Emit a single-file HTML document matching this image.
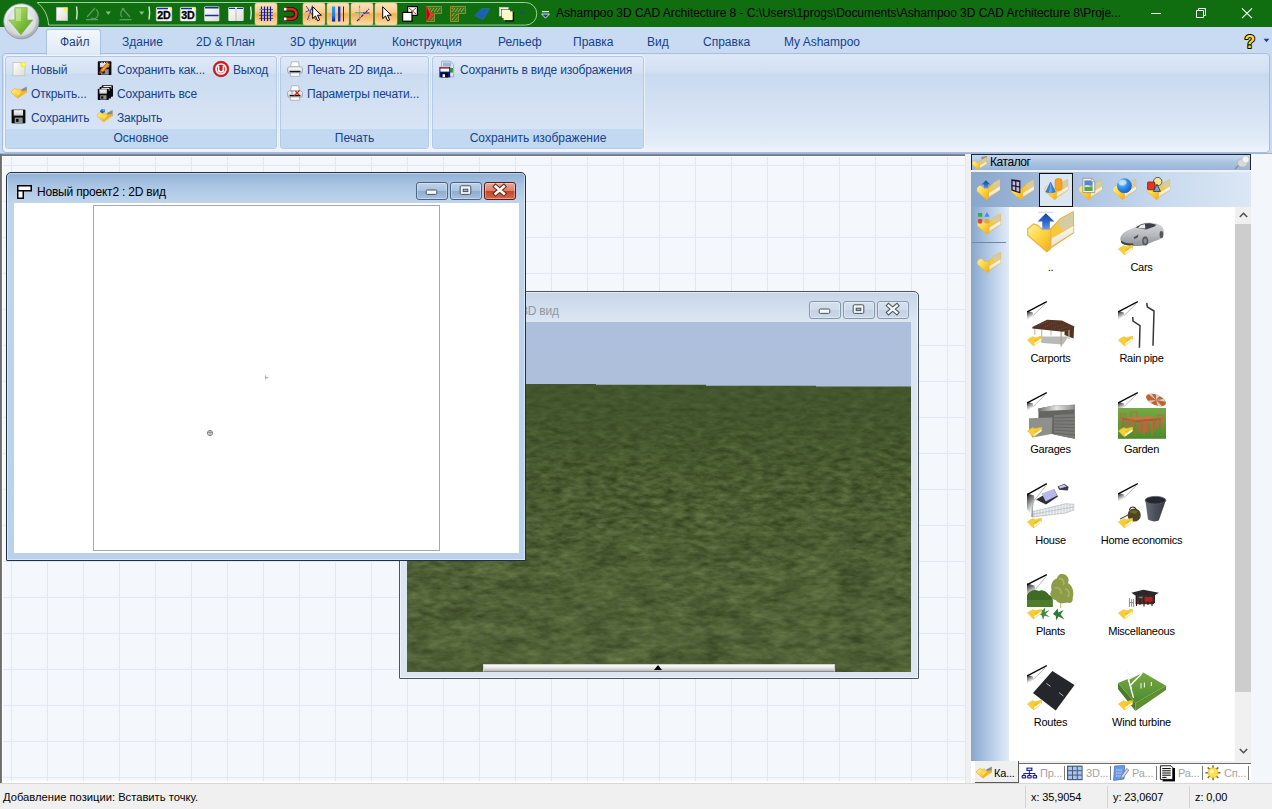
<!DOCTYPE html>
<html lang="ru">
<head>
<meta charset="utf-8">
<title>Ashampoo 3D CAD Architecture 8</title>
<style>
*{box-sizing:border-box;margin:0;padding:0}
html,body{width:1272px;height:809px;overflow:hidden}
body{position:relative;background:#c9dbf3;font-family:"Liberation Sans",sans-serif;font-size:12px;color:#15428b}
.abs{position:absolute}
svg{display:block;overflow:visible}
/* ---------- title bar ---------- */
#title{position:absolute;left:0;top:0;width:1272px;height:27px;background:#106e10}
#title .cap{position:absolute;left:556px;top:6px;white-space:nowrap;color:#000;font-size:12px;letter-spacing:-0.04px}
/* ---------- tab row ---------- */
#tabs{position:absolute;left:0;top:27px;width:1272px;height:27px;background:#c9dbf3}
#tabs .t{position:absolute;top:8px;white-space:nowrap;color:#15428b;font-size:12px}
#tabsel{position:absolute;left:46px;top:29px;width:55px;height:26px;border:1px solid #a9c3e6;border-bottom:none;border-radius:3px 3px 0 0;background:linear-gradient(#f2f7fd,#dfe9f7)}
/* ---------- ribbon ---------- */
#ribbon{position:absolute;left:2px;top:53px;width:1268px;height:100px;border:1px solid #a4bfe3;border-radius:4px;background:linear-gradient(#dde8f6 0,#d4e1f3 17%,#c9daef 21%,#d6e3f4 60%,#e3ecf8 92%,#ebf2fc 96%,#ebf2fc 100%)}
.grp{position:absolute;top:56px;height:93px;border:1px solid #b4c9e6;border-radius:3px;background:linear-gradient(#dfe9f7 0,#d5e2f4 17%,#cbdcf1 19%,#dce7f6 100%);box-shadow:0 0 0 1px rgba(255,255,255,.55)}
.grp .lab{position:absolute;left:0;right:0;bottom:0;height:19px;background:#c3d8f1;text-align:center;line-height:18px;color:#15428b;border-radius:0 0 2px 2px}
.btn{position:absolute;white-space:nowrap;color:#15428b;line-height:16px;letter-spacing:-.15px}
.ico{position:absolute;width:16px;height:16px}
/* ---------- mdi ---------- */
#mdi{position:absolute;left:0;top:153px;width:966px;height:630px;background-color:#f4f7fb;
background-image:linear-gradient(90deg,#e0e9f3 1px,transparent 1px),linear-gradient(#e0e9f3 1px,transparent 1px);background-size:36px 36px;background-position:11px 12px}
/* ---------- mdi child windows ---------- */
.win{position:absolute;border:1px solid #4a5560;border-radius:5px 5px 1px 1px;background:linear-gradient(#c6d6e8 0,#dbe6f2 30px,#dbe6f2 100%);box-shadow:inset 0 0 0 1px rgba(255,255,255,.55)}
.win.act{border-color:#20303c;background:linear-gradient(#8fb0d6 0,#a9c4e3 12px,#c0d5ec 30px,#b9d1ec 100%);box-shadow:inset 0 0 0 1px rgba(255,255,255,.45)}
.win .wt{position:absolute;top:12px;white-space:nowrap;color:#000;font-size:12px;line-height:14px;letter-spacing:-.2px}
.wb{position:absolute;top:9px;width:32px;height:18px;border:1px solid #8797ac;border-radius:3px;background:linear-gradient(#d6e1ee 0,#cfdbea 48%,#c3d2e4 52%,#ccd9e9 100%);box-shadow:inset 0 0 0 1px rgba(255,255,255,.35)}
.win.act .wb{border-color:#4c6380;background:linear-gradient(#bed1ea 0,#aac2e0 48%,#8eabd0 52%,#a8c1e2 100%)}
.win.act .wb.cl{border-color:#5a1d14;background:linear-gradient(#e9a99b 0,#d9806c 48%,#c4452a 52%,#d4694c 100%);box-shadow:inset 0 0 0 1px rgba(255,255,255,.35)}
/* ---------- catalog ---------- */
#rightbg{position:absolute;left:971px;top:154px;width:301px;height:629px;background:#f3f7fb}
#cat{position:absolute;left:971px;top:154px;width:280px;height:629px;background:#f0f0f0}
#cathdr{position:absolute;left:0;top:0;width:280px;height:16px;border:1px solid #1c2530;border-bottom:none;background:linear-gradient(#c9daee,#a9c3e2 50%,#98b6da);color:#000}
#cathdr span{position:absolute;left:18px;top:0;font-size:12px;line-height:14px;letter-spacing:-.45px}
#cattb{position:absolute;left:0;top:17px;width:280px;height:36px;background:linear-gradient(90deg,#89a6cc 0,#a9c1e0 35%,#c9dbef 70%,#dbe7f5 100%);border-top:1px solid #eef3fa}
#cattb .sel{position:absolute;left:68px;top:1px;width:34px;height:34px;border:1px solid #111;background:#dbe6f3}
#catside{position:absolute;left:0;top:53px;width:38px;height:554px;background:linear-gradient(90deg,#88a6cc 0,#b4cae6 50%,#e3ecf8 100%)}
#catlist{position:absolute;left:38px;top:53px;width:226px;height:554px;background:#fff}
#catsb{position:absolute;left:264px;top:53px;width:16px;height:554px;background:#f0f0f0}
#cattabs{position:absolute;left:0;top:607px;width:280px;height:22px;background:#f0f0f0}
.ct{position:absolute;top:6px;font-size:11px;line-height:13px;color:#a3a3a3;white-space:nowrap;letter-spacing:-.2px}
.it{position:absolute;width:48px;height:48px}
.il{position:absolute;width:120px;text-align:center;color:#000;font-size:11px;line-height:13px;white-space:nowrap;letter-spacing:-.25px}
/* ---------- status ---------- */
#status{position:absolute;left:0;top:783px;width:1272px;height:26px;background:#f0f0f0;border-top:1px solid #d7d7d7;color:#000;font-size:11px}
#status span{position:absolute;top:7px;white-space:nowrap;letter-spacing:-.1px}
#status i{position:absolute;top:2px;width:1px;height:22px;background:#d4d4d4}
</style>
</head>
<body>
<div id="title"><div class="cap">Ashampoo 3D CAD Architecture 8 - C:\Users\1progs\Documents\Ashampoo 3D CAD Architecture 8\Proje...</div></div>
<div id="tabs">
<span class="t" style="left:122px">Здание</span>
<span class="t" style="left:196px">2D &amp; План</span>
<span class="t" style="left:290px">3D функции</span>
<span class="t" style="left:392px">Конструкция</span>
<span class="t" style="left:498px">Рельеф</span>
<span class="t" style="left:573px">Правка</span>
<span class="t" style="left:647px">Вид</span>
<span class="t" style="left:703px">Справка</span>
<span class="t" style="left:784px">My Ashampoo</span>
</div>
<div id="ribbon"></div>
<!--QAT_S--><svg class="abs" style="left:0;top:0" width="1272" height="54" viewBox="0 0 1272 54">
 <defs>
  <linearGradient id="og" x1="0" y1="0" x2="0" y2="1"><stop offset="0" stop-color="#fde2bd"/><stop offset=".42" stop-color="#fbcb8c"/><stop offset=".5" stop-color="#f7ad4f"/><stop offset="1" stop-color="#fdddaa"/></linearGradient>
  <radialGradient id="orbo" cx=".4" cy=".3" r=".75"><stop offset="0" stop-color="#ffffff"/><stop offset=".55" stop-color="#e4e8ec"/><stop offset="1" stop-color="#9ea4ab"/></radialGradient>
  <radialGradient id="orbi" cx=".5" cy=".4" r=".6"><stop offset="0" stop-color="#ffffff"/><stop offset="1" stop-color="#cfd4d9"/></radialGradient>
  <linearGradient id="garr" x1="0" y1="0" x2="1" y2="1"><stop offset="0" stop-color="#c4e88c"/><stop offset=".5" stop-color="#86c440"/><stop offset="1" stop-color="#4f9a1c"/></linearGradient>
  <linearGradient id="docg" x1="0" y1="0" x2="1" y2="1"><stop offset="0" stop-color="#ffffff"/><stop offset="1" stop-color="#dcdcd6"/></linearGradient>
  <linearGradient id="barb" x1="0" y1="0" x2="0" y2="1"><stop offset="0" stop-color="#2aa0e8"/><stop offset=".6" stop-color="#1d7fd8"/><stop offset="1" stop-color="#0a1fa0"/></linearGradient>
  <symbol id="cur" viewBox="0 0 10 16"><path d="M.7 .8 V12.6 L3.5 10 L5.6 14.8 L7.6 13.9 L5.5 9.2 H9.3Z" fill="#fff" stroke="#000" stroke-width="1" stroke-linejoin="round"/></symbol>
  <symbol id="hat" viewBox="0 0 16 16"><path d="M.5 .5 H15.5 V7.5 H8.5 V15.5 H.5Z" fill="#2f7a1f" stroke="#9a8a2a" stroke-width="1"/><path d="M2 6 L5 2 M5 6 L8 2 M8 6 L11 2 M11 6 L14 2 M2 10 L4.5 7 M5 10.5 L7.5 7.5 M2 14 L4.5 11 M5 14.5 L7.5 11.5 M2 3 L3 1.5" stroke="#a9a23a" stroke-width="1"/></symbol>
 </defs>
 <!-- QAT outline -->
 <path d="M37 2.5 H525.5 A11.3 11.3 0 0 1 525.5 25.1 H48.6 C48 15 43.5 7.5 37 2.5Z" fill="none" stroke="#9ed09e" stroke-width="1"/>
 <!-- orb -->
 <circle cx="21.3" cy="21.3" r="17.6" fill="url(#orbo)" stroke="#8d949b" stroke-width=".8"/>
 <circle cx="21.3" cy="21.3" r="14.6" fill="url(#orbi)"/>
 <path d="M14.8 7.6 H27.2 V20 H32.8 L20.9 34.8 L8.8 20 H14.8Z" fill="url(#garr)" stroke="#7db04a" stroke-width=".6" stroke-linejoin="round"/>
 <path d="M16 8.6 H21 V21 H16Z" fill="#d8f0b0" opacity=".55"/>
 <!-- new doc -->
 <path d="M56.5 7.5 H67.5 V20.5 H56.5Z" fill="url(#docg)" stroke="#c9c9bd" stroke-width=".8"/><circle cx="65.6" cy="9.4" r="2" fill="#fff34a"/>
 <!-- separators -->
 <path d="M76.5 6.5 Q77.8 13 76.5 19.5 M149 6.5 Q150.3 13 149 19.5 M250.6 6.5 Q251.9 13 250.6 19.5" stroke="#d9ecd9" stroke-width="1.4" fill="none"/>
 <!-- undo / redo (disabled) -->
 <g stroke="#5f9a5f" stroke-width="1.2" fill="none"><path d="M87 17 L95 8 M96 9.5 A4.6 5 0 0 1 91 18 M86 19.6 H98"/><path d="M130 17 L122 8 M124.5 8.6 A4.6 5 0 0 0 122 17 M119.6 19.6 H131.6"/></g>
 <path d="M105.6 11.6 H111 L108.3 14.8Z M139 11.6 H144.4 L141.7 14.8Z" fill="#8cbd8c"/>
 <!-- 2D / 3D icons -->
 <g><rect x="156.3" y="7.3" width="15.4" height="13.6" rx="1" fill="#fff" stroke="#d4d4d4" stroke-width=".6"/><path d="M157 8.6 H168" stroke="#1b2ea0" stroke-width="1.4"/><path d="M168.4 7.3 H171.6 V10.4Z" fill="#ffe94a"/>
  <rect x="180.3" y="7.3" width="15.4" height="13.6" rx="1" fill="#fff" stroke="#d4d4d4" stroke-width=".6"/><path d="M181 8.6 H192" stroke="#1b2ea0" stroke-width="1.4"/><path d="M192.4 7.3 H195.6 V10.4Z" fill="#ffe94a"/></g>
 <text x="164" y="19.4" text-anchor="middle" font-family="Liberation Sans, sans-serif" font-weight="bold" font-size="11" fill="#000" stroke="#000" stroke-width=".35" textLength="13.6" lengthAdjust="spacingAndGlyphs">2D</text>
 <text x="188" y="19.4" text-anchor="middle" font-family="Liberation Sans, sans-serif" font-weight="bold" font-size="11" fill="#000" stroke="#000" stroke-width=".35" textLength="13.6" lengthAdjust="spacingAndGlyphs">3D</text>
 <!-- split icons -->
 <rect x="204.3" y="6.6" width="15" height="14.6" rx="1" fill="url(#docg)"/><path d="M205 7.8 H218.6 M205 15.4 H218.6" stroke="#1b2ea0" stroke-width="1.5"/>
 <rect x="228.3" y="7" width="15.4" height="14" rx="1" fill="url(#docg)"/><path d="M229 8.4 H235 M237 8.4 H243" stroke="#1b2ea0" stroke-width="1.4"/><path d="M236 8 V21" stroke="#b9b9b9" stroke-width="1"/>
 <!-- highlighted buttons -->
 <g fill="url(#og)" stroke="#e9c38f" stroke-width=".6"><rect x="255" y="3" width="22" height="22" rx="2"/><rect x="303" y="3" width="22" height="22" rx="2"/><rect x="327" y="3" width="22" height="22" rx="2"/><rect x="351" y="3" width="22" height="22" rx="2"/><rect x="375" y="3" width="22" height="22" rx="2"/></g>
 <!-- grid icon -->
 <path d="M259 9.5 H273 M259 12.5 H273 M259 15.5 H273 M259 18.5 H273" stroke="#2a6fd0" stroke-width="1.2"/><path d="M261.5 6.5 V21 M264.5 6.5 V21 M267.5 6.5 V21 M270.5 6.5 V21" stroke="#1a1496" stroke-width="1.2"/><path d="M259 9.5 H262 M259 12.5 H261" stroke="#35b6d8" stroke-width="1.2"/>
 <!-- magnet -->
 <path d="M284 9.2 H291.5 A4.8 4.8 0 0 1 291.5 18.8 H284" fill="none" stroke="#111" stroke-width="4.6"/><path d="M284 9.2 H291.5 A4.8 4.8 0 0 1 291.5 18.8 H284" fill="none" stroke="#d8281c" stroke-width="2.8"/><path d="M284 9.2 H286.4 M284 18.8 H286.4" stroke="#fff" stroke-width="2.8"/>
 <!-- star cursor -->
 <path d="M306 6 L316 20 M312.5 5.5 L307.5 20 M305.5 12 L315 8" stroke="#2a3fc0" stroke-width=".9"/><path d="M309.5 10 V21" stroke="#9ac" stroke-width=".8" stroke-dasharray="1 1"/><use href="#cur" x="312" y="6" width="10" height="16"/>
 <!-- bars -->
 <rect x="332" y="6.5" width="3.2" height="15" fill="url(#barb)"/><rect x="338" y="6.5" width="2.4" height="15" fill="#1636b8"/><path d="M343.5 6.5 V21.5" stroke="#1a1a90" stroke-width="1"/>
 <!-- cross lines -->
 <path d="M359.5 5.5 V21" stroke="#3ab8c8" stroke-width="1.2" stroke-dasharray="3 1 1 1"/><path d="M355 12.6 H364" stroke="#3ab8c8" stroke-width="1.1"/><path d="M357 21 L369 9" stroke="#2222b0" stroke-width="1.1" stroke-dasharray="3 1 1 1"/><path d="M363 13 H369.5" stroke="#2222b0" stroke-width="1"/>
 <!-- arrow cursor -->
 <use href="#cur" x="382" y="6" width="10" height="16"/>
 <!-- two squares w/ X -->
 <rect x="407.6" y="6.6" width="9.8" height="8.8" fill="#fff" stroke="#000" stroke-width="1.2"/><path d="M409 8 L416 14 M416 8 L409 14" stroke="#b0362a" stroke-width="1"/><rect x="402.6" y="12.4" width="9.4" height="8.8" fill="#fff" stroke="#000" stroke-width="1.2"/>
 <!-- hatch icons -->
 <use href="#hat" x="426" y="6" width="16" height="16"/><path d="M426.4 6.4 L434 15 L426.4 21.6Z" fill="#e03a34"/><path d="M426.4 6.4 L430 14.5 L426.4 21.6Z" fill="#a01410"/>
 <use href="#hat" x="450" y="6" width="16" height="16"/>
 <!-- blue parallelogram -->
 <path d="M474.8 15.6 L482 8.4 L489.8 8.8 L483 19.6Z" fill="#1d5fb2" stroke="#2a78d0" stroke-width=".5"/>
 <!-- pages -->
 <rect x="499.4" y="7.4" width="8.8" height="8.6" fill="#f4f2dc" stroke="#ddd" stroke-width=".5"/><rect x="501.6" y="9.6" width="8.8" height="8.6" fill="#f8f6dc" stroke="#222" stroke-width=".5"/><path d="M505 20.8 H513.4 V12" stroke="#000" stroke-width="1.4" fill="none"/><rect x="503.6" y="11.4" width="9" height="8.8" fill="#fffbc6"/>
 <path d="M519.8 12 H524.6 L522.2 14.4Z" fill="#1c4a8c"/>
 <!-- customise -->
 <path d="M542 11.6 H549" stroke="#e6f0e6" stroke-width="1.2"/><path d="M541.6 14 H549.4 L545.5 18.2Z" fill="#1c3f9c" stroke="#e6f0e6" stroke-width=".9" stroke-linejoin="round"/>
 <!-- window controls -->
 <path d="M1151 13.5 H1161" stroke="#fff" stroke-width="1"/>
 <path d="M1196.5 10.5 H1203.5 V17.5 H1196.5Z M1198.5 10.5 V8.5 H1205.5 V15.5 H1203.5" fill="none" stroke="#fff" stroke-width="1"/>
 <path d="M1242 8.3 L1252 18.1 M1252 8.3 L1242 18.1" stroke="#fff" stroke-width="1.1"/>
 <!-- help -->
 <text x="1249.8" y="47.6" text-anchor="middle" font-family="Liberation Sans, sans-serif" font-weight="bold" font-size="17.5" fill="#f7df2a" stroke="#000" stroke-width="2" stroke-linejoin="round" paint-order="stroke">?</text>
 <path d="M1263.6 38.8 H1269.4 L1266.5 42.2Z" fill="#1c3f9c"/>
</svg>
<!--QAT_E-->
<div id="tabsel"></div>
<span class="abs" style="left:60px;top:35px;color:#15428b">Файл</span>
<div class="grp" style="left:5px;width:272px"><div class="lab">Основное</div></div>
<div class="grp" style="left:280px;width:149px"><div class="lab">Печать</div></div>
<div class="grp" style="left:432px;width:212px"><div class="lab">Сохранить изображение</div></div>
<span class="btn" style="left:31px;top:62px">Новый</span>
<span class="btn" style="left:31px;top:86px">Открыть...</span>
<span class="btn" style="left:31px;top:110px">Сохранить</span>
<span class="btn" style="left:117px;top:62px">Сохранить как...</span>
<span class="btn" style="left:117px;top:86px">Сохранить все</span>
<span class="btn" style="left:117px;top:110px">Закрыть</span>
<span class="btn" style="left:233px;top:62px">Выход</span>
<span class="btn" style="left:307px;top:62px">Печать 2D вида...</span>
<span class="btn" style="left:307px;top:86px">Параметры печати...</span>
<span class="btn" style="left:460px;top:62px">Сохранить в виде изображения</span>
<!--RI_S--><svg class="abs" style="left:0;top:54px" width="660" height="100" viewBox="0 54 660 100">
 <defs>
  <linearGradient id="lblg" x1="0" y1="0" x2="0" y2="1"><stop offset="0" stop-color="#ffffff"/><stop offset="1" stop-color="#c4c7cc"/></linearGradient>
  <symbol id="flop" viewBox="0 0 15 15"><rect x=".3" y=".3" width="14.4" height="14.4" rx="1" fill="#0a0a0a"/><rect x="2.6" y="1" width="9.6" height="5.6" fill="url(#lblg)"/><rect x="3.6" y="8.6" width="8.2" height="5.6" fill="#8d9096"/><rect x="5" y="10" width="2.6" height="3" fill="#0a0a0a"/></symbol>
  <symbol id="ofold" viewBox="0 0 17 13"><path d="M10.6 3.6 L16.4 .4 V6.6 L11 8Z" fill="#858a92"/><path d="M8.4 5.6 L16.4 4.4 L16.6 6.4 L7.4 12.6Z" fill="#f4b81c"/><path d="M.5 5.2 L4 2.6 L6.6 3.6 L9 3 L10.6 5.4 L7.4 12.6 L.6 7Z" fill="url(#fy)" stroke="#e0a820" stroke-width=".6" stroke-linejoin="round"/><path d="M5.6 7.2 L11.6 5 L8 9.6Z" fill="#ffe27a" opacity=".8"/></symbol>
  <linearGradient id="prg" x1="0" y1="0" x2="0" y2="1"><stop offset="0" stop-color="#ffffff"/><stop offset="1" stop-color="#cfd2d6"/></linearGradient>
  <symbol id="prn" viewBox="0 0 16 16"><path d="M4.4 .8 H11.6 L12.4 6 H3.6Z" fill="#fff" stroke="#9a9da2" stroke-width=".7"/><rect x=".6" y="5.8" width="14.8" height="6.6" rx="2.2" fill="url(#prg)" stroke="#8a8d92" stroke-width=".7"/><path d="M2.6 10.6 H13.4" stroke="#111" stroke-width="1.5"/><path d="M3.4 12 H12.6 V15.2 H3.4Z" fill="#fff" stroke="#9a9da2" stroke-width=".7"/></symbol>
 </defs>
 <!-- new -->
 <rect x="13" y="62.4" width="12" height="13.4" fill="url(#docg)" stroke="#c2c2b8" stroke-width=".8"/><circle cx="23" cy="64.8" r="2.8" fill="#f4ee3c"/><circle cx="23.6" cy="64.2" r="1.3" fill="#fdfb9a"/>
 <!-- open -->
 <use href="#ofold" x="10.8" y="86" width="16.6" height="12.7"/>
 <!-- save -->
 <use href="#flop" x="11.2" y="109.2" width="14.6" height="14.6"/>
 <!-- save as -->
 <use href="#flop" x="97.4" y="61" width="14.4" height="14.4"/><path d="M100 62.6 H109" stroke="#111" stroke-width="1" stroke-dasharray="1.5 1"/><path d="M99.6 73.2 L100.6 69.8 L107.6 62.6 L109.8 64.6 L102.8 72Z" fill="#f5a623" stroke="#c0391b" stroke-width=".9" stroke-linejoin="round"/><path d="M99.6 73.2 L100.6 69.8 L102.8 72Z" fill="#c0391b"/>
 <!-- save all -->
 <g><rect x="101.6" y="85.2" width="11.4" height="11.6" rx=".8" fill="#0a0a0a"/><rect x="103.4" y="86" width="8" height="3" fill="#f4f4f4"/><rect x="99.6" y="87" width="11.4" height="11.6" rx=".8" fill="#0a0a0a"/><rect x="101.4" y="87.8" width="8" height="3" fill="#f4f4f4"/><use href="#flop" x="97.4" y="88.6" width="11.6" height="11.6"/></g>
 <!-- close -->
 <use href="#ofold" x="96.6" y="109.6" width="16.6" height="12.7"/><path d="M100 111.8 Q100.6 108.8 103.6 109 Q105.6 109.4 105 111.6 L102.4 113.4Z" fill="#1c5fd0"/><circle cx="103.6" cy="110.2" r="1.1" fill="#6ab0ff"/>
 <!-- exit -->
 <circle cx="221" cy="69" r="7.8" fill="#d4161c"/><circle cx="221" cy="69" r="7.8" fill="none" stroke="#a80d12" stroke-width=".6"/><circle cx="221" cy="69" r="5" fill="none" stroke="#fff" stroke-width="1.7"/><path d="M218.6 66 V69.4 A2.4 2.4 0 0 0 223.4 69.4 V66" fill="none" stroke="#fff" stroke-width="1.7"/><rect x="219.8" y="65" width="2.4" height="4.2" fill="#d4161c"/>
 <!-- printers -->
 <use href="#prn" x="287" y="61" width="16" height="16"/>
 <use href="#prn" x="287" y="85" width="16" height="16"/><path d="M294 96 L299.6 90.4 M295.4 91 L299 95" stroke="#cc2a1c" stroke-width="1.3"/><path d="M290.6 91.6 H293.6 M291 93 H293" stroke="#777" stroke-width=".6"/>
 <!-- save as image -->
 <g><path d="M441.6 61.2 H450.4 L453.6 64.4 V76.8 H441.6Z" fill="#dfe6ee" stroke="#8d96a3" stroke-width=".7"/><rect x="443" y="62.6" width="8" height="4" fill="#9ab6d8"/><rect x="450" y="68" width="3" height="4.6" fill="#2f9a3f"/><rect x="439.4" y="67" width="10.8" height="10.4" fill="#0a1680"/><rect x="440.4" y="67.2" width="8.8" height="1.4" fill="#e0342a"/><rect x="440.4" y="68.6" width="8.8" height="3" fill="#fff"/><rect x="441.4" y="73" width="6.6" height="4.4" fill="#0a0a0a"/><rect x="442.6" y="74.2" width="2.4" height="3" fill="#fff"/></g>
</svg>
<!--RI_E-->

<div id="mdi"></div>
<div class="abs" style="left:0;top:153px;width:1272px;height:1px;background:#9db4d6"></div>
<div class="abs" style="left:0;top:154px;width:966px;height:2px;background:linear-gradient(#8e98a8,#696969)"></div>
<div class="abs" style="left:0;top:154px;width:2px;height:629px;background:linear-gradient(90deg,#696969,#7d7d7d)"></div>
<div class="abs" style="left:2px;top:156px;width:964px;height:1px;background:#fff"></div>
<div class="abs" style="left:2px;top:156px;width:1px;height:626px;background:#fff"></div>
<div class="abs" style="left:2px;top:781px;width:964px;height:2px;background:#fff"></div>
<div class="abs" style="left:965px;top:154px;width:1px;height:629px;background:#e6e6e6"></div>
<div class="abs" style="left:966px;top:154px;width:5px;height:629px;background:#f0f0f0"></div>
<!-- 3D window (inactive) -->
<div class="win" id="w3d" style="left:399px;top:291px;width:520px;height:388px">
 <div class="wt" style="color:#8e98a5;left:30px">Новый проект2 : 3D вид</div>
 <div class="wb" style="left:409px"><svg class="abs" style="left:0;top:0" width="30" height="16" viewBox="0 0 30 16"><rect x="9.2" y="7" width="10.6" height="4.4" rx="1.2" fill="#f6f8fa" stroke="#46525f" stroke-width="1"/></svg></div>
 <div class="wb" style="left:443px"><svg class="abs" style="left:0;top:0" width="30" height="16" viewBox="0 0 30 16"><rect x="9.2" y="2.8" width="10.6" height="8.6" rx="1.2" fill="#f6f8fa" stroke="#46525f" stroke-width="1"/><rect x="12.2" y="6.2" width="4.6" height="2.4" fill="#9fb3cc" stroke="#46525f" stroke-width="1"/></svg></div>
 <div class="wb" style="left:477px"><svg class="abs" style="left:0;top:0" width="30" height="16" viewBox="0 0 30 16"><path d="M10.6 3.6 L18.8 10.6 M18.8 3.6 L10.6 10.6" stroke="#46525f" stroke-width="4.4" stroke-linecap="square"/><path d="M10.6 3.6 L18.8 10.6 M18.8 3.6 L10.6 10.6" stroke="#f6f8fa" stroke-width="2.4" stroke-linecap="square"/></svg></div>
 <div class="abs" id="scene" style="left:7px;top:30px;width:504px;height:350px;overflow:hidden;background:#4d5d33">
  <svg width="504" height="350" viewBox="0 0 504 350">
   <defs>
    <filter id="gr" x="0" y="0" width="100%" height="100%" color-interpolation-filters="sRGB">
     <feTurbulence type="fractalNoise" baseFrequency="0.09 0.22" numOctaves="4" seed="7"/>
     <feColorMatrix type="matrix" values="0.34 0.10 0 0 0.07  0.36 0.12 0 0 0.12  0.28 0.06 0 0 0.02  0 0 0 0 1"/>
    </filter>
    <filter id="gr2" x="0" y="0" width="100%" height="100%" color-interpolation-filters="sRGB">
     <feTurbulence type="fractalNoise" baseFrequency="0.028 0.07" numOctaves="4" seed="11"/>
     <feColorMatrix type="matrix" values="0.30 0.12 0 0 0.09  0.32 0.14 0 0 0.14  0.24 0.08 0 0 0.04  0 0 0 0 1"/>
    </filter>
    <linearGradient id="gm" x1="0" y1="0" x2="0" y2="1"><stop offset="0" stop-color="#fff" stop-opacity="0"/><stop offset=".25" stop-color="#fff" stop-opacity=".12"/><stop offset="1" stop-color="#fff" stop-opacity=".62"/></linearGradient>
    <mask id="gmask"><rect width="504" height="350" fill="url(#gm)"/></mask>
    <linearGradient id="gflat" x1="0" y1="0" x2="0" y2="1"><stop offset="0" stop-color="#46592f" stop-opacity=".7"/><stop offset="1" stop-color="#46592f" stop-opacity="0"/></linearGradient>
    <linearGradient id="gshade" x1="0" y1="0" x2="0" y2="1"><stop offset="0" stop-color="#1c2a10" stop-opacity=".28"/><stop offset=".3" stop-color="#1c2a10" stop-opacity=".05"/><stop offset="1" stop-color="#fff" stop-opacity=".03"/></linearGradient>
   </defs>
   <rect width="504" height="350" filter="url(#gr)"/>
   <g mask="url(#gmask)"><rect width="504" height="350" filter="url(#gr2)"/></g>
   <rect y="60" width="504" height="290" fill="url(#gshade)"/><rect y="60" width="504" height="110" fill="url(#gflat)"/>
   <path d="M0 0H504V64.5H409V63.7H299V62.8H189V62H0Z" fill="#adbfdb"/>
  </svg>
  <div class="abs" style="left:76px;top:342px;width:352px;height:8px;background:linear-gradient(#fdfdfd,#e9e9e9 45%,#b9b9b9);border:1px solid #cfcfcf;border-bottom-color:#8a8a8a"></div>
  <div class="abs" style="left:247px;top:343px;width:0;height:0;border:4px solid transparent;border-top:none;border-bottom:5px solid #000"></div>
 </div>
</div>
<!-- 2D window (active) -->
<div class="win act" id="w2d" style="left:6px;top:172px;width:520px;height:389px">
 <svg class="abs" style="left:10px;top:12px" width="15" height="14" viewBox="0 0 15 14"><path d="M.75.75H14.25V5.75H6.25V13.25H.75Z" fill="#fff" stroke="#000" stroke-width="1.5"/><path d="M.75 5.75H6.25" fill="none" stroke="#000" stroke-width="1.5"/></svg>
 <div class="wt" style="left:30px">Новый проект2 : 2D вид</div>
 <div class="wb" style="left:409px"><svg class="abs" style="left:0;top:0" width="30" height="16" viewBox="0 0 30 16"><rect x="9.2" y="7" width="10.6" height="4.4" rx="1.2" fill="#f6f8fa" stroke="#46525f" stroke-width="1"/></svg></div>
 <div class="wb" style="left:443px"><svg class="abs" style="left:0;top:0" width="30" height="16" viewBox="0 0 30 16"><rect x="9.2" y="2.8" width="10.6" height="8.6" rx="1.2" fill="#f6f8fa" stroke="#46525f" stroke-width="1"/><rect x="12.2" y="6.2" width="4.6" height="2.4" fill="#9fb3cc" stroke="#46525f" stroke-width="1"/></svg></div>
 <div class="wb cl" style="left:477px"><svg class="abs" style="left:0;top:0" width="30" height="16" viewBox="0 0 30 16"><path d="M10.6 3.6 L18.8 10.6 M18.8 3.6 L10.6 10.6" stroke="#6a2418" stroke-width="4.6" stroke-linecap="square"/><path d="M10.6 3.6 L18.8 10.6 M18.8 3.6 L10.6 10.6" stroke="#ffffff" stroke-width="2.6" stroke-linecap="square"/></svg></div>
 <div class="abs" style="left:7px;top:30px;width:505px;height:350px;background:#fff">
  <div class="abs" style="left:79px;top:2px;width:347px;height:346px;border:1px solid #a8a8a8"></div>
  <svg class="abs" style="left:249px;top:171px" width="7" height="7" viewBox="0 0 7 7"><path d="M2 0.5 L3.5 3.2 L6.5 3.8 L3.2 4.4 L2.6 6.5Z" fill="#9a9a9a"/></svg>
  <svg class="abs" style="left:192px;top:226px" width="8" height="8" viewBox="0 0 8 8"><circle cx="4" cy="4" r="2.6" fill="#ddd" stroke="#888" stroke-width="1"/><path d="M1 3.5H7M4 1V7" stroke="#777" stroke-width=".6"/></svg>
 </div>
</div>

<div id="rightbg"></div>
<svg width="0" height="0" style="position:absolute">
 <defs>
  <linearGradient id="fy" x1="0" y1="0" x2="1" y2="1"><stop offset="0" stop-color="#fff0a0"/><stop offset=".45" stop-color="#ffd84a"/><stop offset="1" stop-color="#f2ac12"/></linearGradient>
  <linearGradient id="fb" x1="0" y1="0" x2="0" y2="1"><stop offset="0" stop-color="#d8d0a8"/><stop offset="1" stop-color="#f0cf62"/></linearGradient>
  <linearGradient id="fw" x1="0" y1="0" x2="0.35" y2="1"><stop offset="0" stop-color="#ffffff"/><stop offset="1" stop-color="#e4e1d6"/></linearGradient>
  <linearGradient id="ba" x1="0" y1="0" x2="0" y2="1"><stop offset="0" stop-color="#17449c"/><stop offset=".55" stop-color="#2f68c8"/><stop offset="1" stop-color="#6e9be6"/></linearGradient>
  <radialGradient id="globeg" cx=".35" cy=".3" r=".8"><stop offset="0" stop-color="#8fd0ff"/><stop offset=".5" stop-color="#2f8be6"/><stop offset="1" stop-color="#1458b8"/></radialGradient>
  <symbol id="fold" viewBox="0 0 48 42">
   <path d="M23.6 18.5 L32.2 9.6 L33.6 7.8 L46.8 .7 L47.4 21.8 L25 36.8 L20 41.3Z" fill="#f8c836" stroke="#e3b54e" stroke-width="1.2" stroke-linejoin="round"/>
   <path d="M33.2 9 L46.3 1.6 L46.7 14.6 L36.9 19.9 L31.4 14.6Z" fill="#d5cca6"/>
   <path d="M25 27.8 L46.9 15.2 L46.9 21.5 L24.8 35.4Z" fill="url(#fw)"/>
   <path d="M.7 18 L6.5 13 L11 14.6 L16 19 L23.9 18.5 L23.5 38.4 L20 41.3 L.7 24.6Z" fill="url(#fy)" stroke="#e3b54e" stroke-width="1.2" stroke-linejoin="round"/>
  </symbol>
  <symbol id="uparr" viewBox="0 0 20 19">
   <path d="M1 .8H17" stroke="#b9c0c8" stroke-width=".8"/>
   <path d="M9 1.8 L18 10.6 H13.2 V19 H5.2 V10.6 H.4Z" fill="url(#ba)"/>
  </symbol>
 </defs>
</svg>
<div id="cat">
 <div id="cathdr"><svg class="abs" style="left:0;top:1px" width="16" height="14"><path d="M9 1 L15 0 V6 L11 7Z" fill="#8a8f96"/><use href="#fold" y="1" width="15" height="13"/></svg><span>Каталог</span>
  <svg class="abs" style="left:262px;top:0" width="16" height="15" viewBox="0 0 16 15"><path d="M1 14 L7 8" stroke="#8d8d8d" stroke-width="1.4"/><ellipse cx="8.5" cy="8" rx="5" ry="4.2" fill="#d9d9d9" stroke="#a5a5a5" stroke-width=".6"/><circle cx="11.6" cy="4.4" r="3.6" fill="#f3f3f3" stroke="#b5b5b5" stroke-width=".6"/></svg>
 </div>
 <div id="cattb">
<div class="sel"></div>
<svg class="abs" style="left:0;top:0" width="280" height="35" viewBox="0 0 280 35">
<use href="#fold" x="5.5" y="7" width="24" height="21"/>
<use href="#fold" x="39.5" y="7" width="24" height="21"/>
<use href="#fold" x="73.5" y="7" width="24" height="21"/>
<use href="#fold" x="107.5" y="7" width="24" height="21"/>
<use href="#fold" x="141.5" y="7" width="24" height="21"/>
<use href="#fold" x="175.5" y="7" width="24" height="21"/>
<use href="#uparr" x="10.6" y="7.2" width="9.6" height="9.3"/>
<path d="M40.3 7.2 L49.4 8.4 V21.6 L40.3 18.4Z" fill="#1b1622"/><path d="M41.6 9 L44.2 9.4 V13.4 L41.6 13Z M45.4 9.6 L48.2 10 V14.2 L45.4 13.7Z M41.6 14.2 L44.2 14.7 V18.4 L41.6 17.6Z M45.4 15 L48.2 15.5 V19.8 L45.4 18.9Z" fill="#c6b9e6"/>
<rect x="84" y="6.6" width="7" height="11.6" rx="2.6" fill="#f7a325" stroke="#dc8512" stroke-width=".6"/><path d="M79.6 10 L84.4 20 Q79.6 21.6 74.8 20Z" fill="#2f83e4" stroke="#1a5ab8" stroke-width=".5"/><path d="M79.6 10 L81 20.6 Q79.6 21 78 20.6Z" fill="#7fb8f5" opacity=".7"/>
<path d="M111.8 6.2 H120.4 L123.8 9.4 V20.6 H111.8Z" fill="#f0f0f0" stroke="#8c8c8c" stroke-width=".8"/><path d="M113.4 8.4 H121.6 V13.6 H113.4Z" fill="#5a86cf"/><path d="M113.4 13.6 H121.6 V19 H113.4Z" fill="#5ea442"/><path d="M113.4 14.4 Q116 12 118.6 14 T121.6 13 V15 H113.4Z" fill="#cfe1f5"/><path d="M120.4 6.2 V9.4 H123.8Z" fill="#fff" stroke="#8c8c8c" stroke-width=".6"/>
<circle cx="153.4" cy="13.7" r="7.4" fill="url(#globeg)"/><ellipse cx="151.4" cy="10.6" rx="4" ry="2.8" fill="#d6ecff" opacity=".75"/>
<circle cx="186.7" cy="9.6" r="4.2" fill="#f6e690" stroke="#3a3a3a" stroke-width=".8"/><rect x="176.6" y="10" width="7.2" height="7.8" rx=".8" fill="#e2371f" stroke="#7c1a0c" stroke-width=".8"/><path d="M186 12.2 L189.4 19.4 H182.4Z" fill="#78a5d8" stroke="#2a2f3a" stroke-width=".8" stroke-linejoin="round"/>
</svg>
 </div>
 <div id="catside">
  <svg class="abs" style="left:0;top:0" width="38" height="80" viewBox="0 0 38 80">
   <use href="#fold" x="6" y="6.5" width="24" height="21"/>
   <rect x="7" y="6" width="4.2" height="3.8" fill="#3aa843"/><path d="M16 5 L18.6 9.8 H13.4Z" fill="#3d8de0"/><rect x="7" y="12" width="4.2" height="4.6" rx="1" fill="#e0452a"/><circle cx="16" cy="14.2" r="2.4" fill="#f0a030"/>
   <path d="M1 35.5 H35" stroke="#6f87a5" stroke-width="1"/>
   <use href="#fold" x="6" y="45" width="24" height="21"/>
  </svg>
 </div>
 <div id="catlist"><!--ITEMS_S--><svg class="abs" style="left:0;top:0" width="226" height="556" viewBox="0 0 226 556"><defs>
<linearGradient id="peng" x1="0" y1="0" x2=".35" y2="1"><stop offset="0" stop-color="#000" stop-opacity=".95"/><stop offset=".45" stop-color="#444" stop-opacity=".6"/><stop offset="1" stop-color="#999" stop-opacity="0"/></linearGradient>
<linearGradient id="carg" x1="0" y1="0" x2="0" y2="1"><stop offset="0" stop-color="#d6d8dc"/><stop offset=".55" stop-color="#b6b8bd"/><stop offset="1" stop-color="#8e9095"/></linearGradient>
<linearGradient id="roofg" x1="0" y1="0" x2="1" y2="0"><stop offset="0" stop-color="#6e6e6b"/><stop offset=".5" stop-color="#e4e4e4"/><stop offset="1" stop-color="#8c8c8a"/></linearGradient>
<linearGradient id="gardg" x1="0" y1="0" x2="0" y2="1"><stop offset="0" stop-color="#74aa44"/><stop offset="1" stop-color="#4e8a2c"/></linearGradient>
<linearGradient id="buckg" x1="0" y1="0" x2="1" y2="0"><stop offset="0" stop-color="#6a6e78"/><stop offset=".5" stop-color="#4a4e58"/><stop offset="1" stop-color="#3a3d46"/></linearGradient>
<symbol id="pen" viewBox="0 0 20 19"><path d="M0 9.8 L5.8 11.4 L6.4 14.4 L0 18.8Z" fill="url(#peng)"/><path d="M6.3 14.4 L18.2 2.8" stroke="#8a8a8a" stroke-width=".6"/><path d="M.2 10.8 L19.8 .6" stroke="#000" stroke-width="1.3"/></symbol>
<symbol id="sfold" viewBox="0 0 15 11"><path d="M.5 4.4 L5.4 1.2 L8.4 2.2 L14.4 .8 L14.6 4.4 L6.4 10.4Z" fill="#f7cf34" stroke="#ecc046" stroke-width=".7" stroke-linejoin="round"/><path d="M7.4 7.4 L14.3 3 L14.3 4.7 L6.9 9.8Z" fill="#fdfbf0"/><path d="M6.6 5 L12.6 2 L9 6.2Z" fill="#f4b81c" opacity=".8"/></symbol>
</defs><g transform="translate(18 3)"><use href="#fold" x="0" y="1" width="47.5" height="41.5"/><use href="#uparr" x="10.3" y="1.2" width="19" height="18.5"/></g>
<g transform="translate(109 3)"><path d="M2.2 29 C2.5 24 8 20.5 16 18 L22.5 14 C28 11.6 36 12 41 14.6 C45.5 16.6 46.5 21 45.4 25 L44.6 28 L40 30 C35 31.6 30 34 25.5 35.4 C17 36.6 7 36 3.4 33Z" fill="url(#carg)"/>
<path d="M17.5 17.6 L23.4 14.2 C28 12.6 34 12.8 38.4 14.8 L36.5 16.4 L28 19.6Z" fill="#3b3e44"/>
<path d="M22.5 15.2 L26.8 14 L27.4 18.6 L20 18Z" fill="#e9ecf0"/>
<ellipse cx="27.2" cy="31" rx="3" ry="4.6" fill="#55585d"/><ellipse cx="27.2" cy="31" rx="1.6" ry="2.8" fill="#8a8d92"/>
<ellipse cx="43.4" cy="24.4" rx="1.9" ry="3.5" fill="#55585d"/>
<path d="M3 30.5 C6 33 11 34 15 33.4 L15.4 35.4 C10 36 5 35 3.2 32.6Z" fill="#3d4046"/>
<path d="M15.5 27.5 L20.5 24.6 L19.6 27.4 L16.4 29Z" fill="#4a4d52"/><use href="#sfold" x="0" y="34.5" width="15" height="11"/></g>
<g transform="translate(18 94)"><use href="#pen" width="20" height="19"/><path d="M12 35.4 L41.4 35.4 L36 43.4 L14.7 42Z" fill="#b9b9b9"/>
<path d="M37.5 30 L47 26.6 L46.6 37.6 L37.5 34Z" fill="#4a3426"/>
<path d="M7.8 27 V34 M14.7 27.4 V36 M24 27.4 V34.5 M42 28 V38" stroke="#cdb98f" stroke-width="1.1"/>
<path d="M34.2 30 V45.6" stroke="#b9a477" stroke-width="1.3"/>
<path d="M5.3 26 L20 18.7 L34.8 19.4 L47.5 25.4 L46.8 27.4 L36 30.8 L5.3 27.6Z" fill="#553626"/>
<path d="M12 24 L22 20 M18 25.6 L30 21 M26 27 L38 22.6 M32 28.8 L43 25" stroke="#8a4a3a" stroke-width=".8" stroke-dasharray="1 1.2"/><use href="#sfold" x="0" y="34.5" width="15" height="11"/></g>
<g transform="translate(109 94)"><use href="#pen" width="20" height="19"/><path d="M14.7 16 L15 20 L22 24.7 L21.4 46.8" fill="none" stroke="#34373d" stroke-width="1.5"/>
<path d="M28.7 2 L29.4 6 L36 10 L35 44.8" fill="none" stroke="#34373d" stroke-width="1.5"/><use href="#sfold" x="0" y="34.5" width="15" height="11"/></g>
<g transform="translate(18 185)"><use href="#pen" width="20" height="19"/><path d="M11.4 16.5 L27 13.6 L47.8 12.8 V46.8 L27 42.5 L11.4 38Z" fill="#646461"/>
<path d="M11.4 16.5 L27 13.6 L47.8 12.8 V17.4 L27 18.6 L11.4 19.4Z" fill="url(#roofg)"/>
<path d="M27 23 L47.8 22 V46.8 L27 42.5Z" fill="#7b7b78"/>
<path d="M27 26 L47.8 25.3 M27 29 L47.8 28.8 M27 32 L47.8 32.3 M27 35 L47.8 35.8 M27 38 L47.8 39.3 M27 41 L47.8 42.8" stroke="#5c5c5a" stroke-width=".7"/>
<path d="M2 26.2 L25.4 25.4 L24.7 42 L5.3 45.6 L2 38Z" fill="#8f8f8d"/><use href="#sfold" x="0" y="34.5" width="15" height="11"/></g>
<g transform="translate(109 185)"><use href="#pen" width="20" height="19"/><rect x="0" y="16" width="48" height="30.8" fill="url(#gardg)"/>
<g transform="rotate(22 38 8)"><ellipse cx="38" cy="8" rx="10.6" ry="5.2" fill="#c2622c"/><path d="M38 8 L29 5.4 L31.5 4Z M38 8 L36 2.8 L40 2.8Z M38 8 L45 4.2 L47.5 6Z M38 8 L46 11.5 L42 12.8Z M38 8 L34 13 L30.5 11.8Z" fill="#cfd0d4"/></g>
<path d="M4 25.4 L30.7 24 L42.8 26 L17.4 28.2Z" fill="#c27845"/><path d="M17.4 28.2 L42.8 26 L42.8 28 L17.4 30.4Z M4 25.4 L17.4 28.2 V30.4 L4 27.4Z" fill="#a85c34"/><path d="M19 30 H30 V40 H19Z M33 28.4 H40 V36 H33Z M7 27.6 H15 V34 H7Z" fill="#b4683c" opacity=".75"/>
<path d="M5 26 V36 M17.4 28 V44 M30.5 27 V41 M42 26 V38 M24 27.6 V42 M36 26.6 V39" stroke="#b0643a" stroke-width="1.5"/>
<path d="M3 21 V31 M7.5 21 V27 M3 22 H7.5 M13 20 H19 V25 M13 20 V25 M40 22 V34 M44.5 22.5 V33 M40 23.5 H44.5 M26 30 H34 V43 M26 30 V43" stroke="#b86c40" stroke-width="1.1" fill="none"/><use href="#sfold" x="0" y="34.5" width="15" height="11"/></g>
<g transform="translate(18 276)"><path d="M0 10.6 L7 12.4 L7.6 17 L4.8 33 L0 26Z" fill="url(#peng)"/><path d="M7.6 17 L19 2.6" stroke="#8a8a8a" stroke-width=".6"/><path d="M.2 11.6 L19.8 .6" stroke="#000" stroke-width="1.4"/>
<path d="M9 16.5 L19 21.4 L31 13.4 L27 6.2Z" fill="#2f2f36"/>
<path d="M14.7 10.4 L26.7 6 L30.2 12.4 L18.7 18.4Z" fill="#b8b8ee"/>
<path d="M30.7 3.4 L37.4 .8 L41.6 4 L40.8 7.6 L32 6.8Z" fill="#3a3a40"/><path d="M31.8 3.6 L37.2 1.6 L39.6 3.6 L33 5.6Z" fill="#c4c4f2"/>
<path d="M5.3 28.7 L38.8 20.7 L47.5 21.4 L47.5 26.7 L38.8 30 L5.3 34Z" fill="#eef0f2"/>
<path d="M5.3 28.7 L38.8 20.7 L47.5 21.4 M5.3 34 L38.8 30 L47.5 26.7 M5.3 31.3 L38.8 25.3 L47.5 24" stroke="#a9adb2" stroke-width=".6" fill="none"/>
<path d="M7 28.3V33.8 M10 27.6V33.4 M13 26.9V33 M16 26.2V32.7 M19 25.5V32.3 M22 24.8V32 M25 24V31.6 M28 23.3V31.3 M31 22.6V30.9 M34 21.9V30.6 M37 21.2V30.2 M40 20.8V29.5 M43 21V28.4 M46 21.3V27.3" stroke="#b4b8bd" stroke-width=".6"/>
<path d="M5.3 18 L6.4 34 L4.2 34Z" fill="#9aa0a8"/><use href="#sfold" x="0" y="34.5" width="15" height="11"/></g>
<g transform="translate(109 276)"><use href="#pen" width="20" height="19"/><path d="M27.2 16.4 L47.8 17.4 L40.8 37.6 C38 39 33 38.6 30 36.6Z" fill="url(#buckg)"/>
<ellipse cx="37.5" cy="17.2" rx="10.3" ry="3.8" fill="#23272f" stroke="#5a5e68" stroke-width=".8"/>
<path d="M11.4 27 A3.6 4 0 0 1 18 26" fill="none" stroke="#2c2a1c" stroke-width="1.1"/>
<circle cx="16.2" cy="32" r="6.6" fill="#4c4622"/><path d="M11 29 Q15 26 20 28.5 L17 31Z" fill="#6d6636"/>
<path d="M2 36 L10 32" stroke="#3a351c" stroke-width="1"/><use href="#sfold" x="0" y="34.5" width="15" height="11"/></g>
<g transform="translate(18 367)"><path d="M0 9.6 L7.4 11.6 L8.4 15.4 L1.4 23 L0 22Z" fill="url(#peng)"/><path d="M8.4 15.4 L19 2.6" stroke="#8a8a8a" stroke-width=".6"/><path d="M.2 10.6 L19.8 .6" stroke="#000" stroke-width="1.4"/>
<path d="M0 21 C3 16 8 15 12 17 C16 15 20 18 22 21 L25.6 23 V33 H0Z" fill="#3f6b25"/>
<path d="M0 26 H25.6 V33 H0Z" fill="#4d7d2c"/>
<path d="M33.6 26 V34" stroke="#cfc3a0" stroke-width="1.2"/>
<path d="M34 0 C40 -1 43 5 41 9 C46 12 47.5 19 45.6 24 C46.5 28 43 30 40 28.6 C37 30 30 29.5 29 26 C24 26 22 20 24.6 16 C23 11 26 5 30 4.6 C30.6 2 32 .5 34 0Z" fill="#8e9b48"/>
<path d="M32 5 C36 4 38 8 36 11 M28 14 C32 13 35 16 34 20 M38 15 C42 15 43 20 41 23" stroke="#a9b463" stroke-width="1.6" fill="none"/>
<path d="M11.5 39.5 L18.5 33.6 L17.6 38 L22.6 36 L18.6 40 L23 43 L17.5 41.8 L16 46 L14.8 41.6Z" fill="#3c8b3f"/>
<path d="M26 40 L30.6 34.4 L31.4 38.4 L36.6 36 L33.6 40.4 L37.6 45.6 L31.6 42.4 L29 46.4 L28.8 42Z" fill="#2f7a36"/><use href="#sfold" x="0" y="34.5" width="15" height="11"/></g>
<g transform="translate(109 367)"><rect x="17.6" y="21" width="18.6" height="9.2" fill="#5a2a26"/>
<path d="M18.5 21V32 M22 21V31 M26 21V32.5 M30 21V31 M34 21V32 M36.4 21V29" stroke="#1d1d22" stroke-width="1.1"/>
<rect x="26.6" y="23" width="8" height="4.6" fill="#b0231c"/><rect x="21" y="22.6" width="3.6" height="1.6" fill="#2a9aa6"/>
<path d="M13.4 18.7 L25.4 15.8 L40.8 18.7 L36.4 21.6 L17.4 21.6Z" fill="#29292d"/>
<path d="M11.4 24V33 M13.6 25V32.6 M11.4 28.6H15.6 M15.6 25V33" stroke="#7d7f86" stroke-width=".9"/><use href="#sfold" x="0" y="34.5" width="15" height="11"/></g>
<g transform="translate(18 458)"><use href="#pen" width="20" height="19"/><path d="M25.4 6 L47.5 20 L28.7 45.5 L6 28Z" fill="#25262c"/>
<path d="M19.4 18.4 L23.6 21.4 M32 27.6 L36.4 31" stroke="#c8c8cc" stroke-width=".9"/><use href="#sfold" x="0" y="34.5" width="15" height="11"/></g>
<g transform="translate(109 458)"><path d="M0 18 L17.4 38 L17.4 46 L0 24Z" fill="#4c7a28"/><path d="M17.4 38 L48 20.7 L48 25 L17.4 46Z" fill="#5d8f30"/>
<path d="M0 18 L25.4 7.4 L48 20.7 L17.4 38Z" fill="url(#gardg)"/>
<path d="M8 6 L15.6 33" stroke="#fff" stroke-width="1.3"/><path d="M10 14 L8.6 4 M10.4 14.4 L21 9 L24 8 M10.4 14.4 L13.6 24" stroke="#f6f6f6" stroke-width="1.2" fill="none"/>
<path d="M23 18V23.5 M26.4 17.4V22.6 M33.4 17V21" stroke="#f0f0f0" stroke-width="1.1"/>
<path d="M13 20 C17 14 22 12 24 8" stroke="#fff" stroke-width="1.4" fill="none"/><use href="#sfold" x="0" y="34.5" width="15" height="11"/></g>
</svg>
<div class="il" style="left:-18.5px;top:54px">..</div>
<div class="il" style="left:72.5px;top:54px">Cars</div>
<div class="il" style="left:-18.5px;top:145px">Carports</div>
<div class="il" style="left:72.5px;top:145px">Rain pipe</div>
<div class="il" style="left:-18.5px;top:236px">Garages</div>
<div class="il" style="left:72.5px;top:236px">Garden</div>
<div class="il" style="left:-18.5px;top:327px">House</div>
<div class="il" style="left:72.5px;top:327px">Home economics</div>
<div class="il" style="left:-18.5px;top:418px">Plants</div>
<div class="il" style="left:72.5px;top:418px">Miscellaneous</div>
<div class="il" style="left:-18.5px;top:509px">Routes</div>
<div class="il" style="left:72.5px;top:509px">Wind turbine</div>
<!--ITEMS_E--></div>
 <div id="catsb">
  <svg class="abs" style="left:4px;top:5px" width="9" height="6" viewBox="0 0 9 6"><path d="M.8 5 L4.5 1.3 L8.2 5" fill="none" stroke="#505050" stroke-width="1.6"/></svg>
  <div class="abs" style="left:0;top:17px;width:16px;height:468px;background:#cdcdcd"></div>
  <svg class="abs" style="left:4px;top:541px" width="9" height="6" viewBox="0 0 9 6"><path d="M.8 1 L4.5 4.7 L8.2 1" fill="none" stroke="#505050" stroke-width="1.6"/></svg>
 </div>
 <div id="cattabs"><!--CT_S--><div class="abs" style="left:0;top:0;width:5px;height:22px;background:#fff"></div>
<div class="abs" style="left:47px;top:2px;width:233px;height:20px;background:#fff;border-top:1px solid #6d6d6d;border-left:1px solid #6d6d6d"></div>
<div class="abs" style="left:4px;top:0;width:44px;height:22px;background:#f0f0f0;border-bottom:1px solid #5a5a5a;border-right:1px solid #5a5a5a"></div>
<svg class="abs" style="left:0;top:0" width="280" height="22" viewBox="971 761 280 22">
 <use href="#ofold" x="976" y="766" width="16.4" height="12.6"/>
 <!-- org chart -->
 <g fill="#1a1ab0" stroke="none"><rect x="1026.4" y="767.6" width="6" height="3.4"/><rect x="1027.6" y="768.6" width="3.6" height="1.4" fill="#dfe6ff"/><path d="M1028.9 771 H1029.9 V773 H1035.4 V775 H1034.4 V774 H1029.9 V775 H1028.9 V774 H1024.4 V775 H1023.4 V773 H1028.9Z"/><rect x="1021.6" y="775" width="4.6" height="3.4" rx="1"/><rect x="1027.1" y="775" width="4.6" height="3.4" rx="1"/><rect x="1032.6" y="775" width="4.6" height="3.4" rx="1"/><rect x="1022.8" y="776" width="2.2" height="1.4" fill="#dfe6ff"/><rect x="1028.3" y="776" width="2.2" height="1.4" fill="#dfe6ff"/><rect x="1033.8" y="776" width="2.2" height="1.4" fill="#dfe6ff"/></g>
 <!-- grid -->
 <rect x="1067" y="765.6" width="15.6" height="14.6" fill="#4a5a7a"/><g fill="#a9c4ee"><rect x="1068.2" y="766.8" width="3.8" height="3.4"/><rect x="1073" y="766.8" width="3.8" height="3.4"/><rect x="1077.8" y="766.8" width="3.8" height="3.4"/><rect x="1068.2" y="771.2" width="3.8" height="3.4"/><rect x="1073" y="771.2" width="3.8" height="3.4"/><rect x="1077.8" y="771.2" width="3.8" height="3.4"/><rect x="1068.2" y="775.6" width="3.8" height="3.4"/><rect x="1073" y="775.6" width="3.8" height="3.4"/><rect x="1077.8" y="775.6" width="3.8" height="3.4"/></g>
 <!-- calc -->
 <path d="M1114.6 766 L1124.6 765.6 L1124 779 L1113.6 780.4Z" fill="#6a9ae6" stroke="#3a68c0" stroke-width=".7"/><path d="M1116 770 H1122 M1116 773 H1121.6 M1116 776 H1121" stroke="#cfe0ff" stroke-width="1.1" stroke-dasharray="1.4 .8"/><path d="M1120.6 779 L1121.6 775.6 L1126.6 768.6 L1128.8 770 L1123.6 777.4Z" fill="#d8d8d8" stroke="#6a6a6a" stroke-width=".7"/>
 <!-- document -->
 <path d="M1162.6 768 H1175 V781.4 H1162.6Z" fill="#000"/><path d="M1160.4 765.8 H1171 L1172.8 767.6 V779.4 H1160.4Z" fill="#fff" stroke="#000" stroke-width=".9"/><path d="M1162.2 768.6 H1170.8 M1162.2 770.8 H1170.8 M1162.2 773 H1170.8 M1162.2 775.2 H1170.8 M1162.2 777.4 H1166.5" stroke="#000" stroke-width="1"/>
 <!-- sun -->
 <g stroke="#8a6a1c" stroke-width="1.5"><path d="M1213 765.2 V768 M1213 777.4 V780.2 M1205.5 772.7 H1208.3 M1217.7 772.7 H1220.5 M1207.7 767.4 L1209.7 769.4 M1216.3 776 L1218.3 778 M1218.3 767.4 L1216.3 769.4 M1209.7 776 L1207.7 778"/></g><circle cx="1213" cy="772.7" r="4.9" fill="#ffe24a" stroke="#e8b820" stroke-width=".7"/><circle cx="1211.8" cy="771.4" r="2" fill="#fff6b0"/>
 <path d="M1064.5 766 V780 M1110.5 766 V780 M1156.5 766 V780 M1202.5 766 V780 M1248.5 766 V780" stroke="#7a7a7a" stroke-width="1"/>
</svg>
<span class="ct" style="left:23px;color:#000">Ка...</span>
<span class="ct" style="left:69px">Пр...</span>
<span class="ct" style="left:115px">3D...</span>
<span class="ct" style="left:161px">Ра...</span>
<span class="ct" style="left:207px">Ра...</span>
<span class="ct" style="left:253px">Сп...</span>
<!--CT_E--></div>
</div>

<div id="status"><i style="left:1025px"></i><i style="left:1107px"></i><i style="left:1189px"></i><span style="left:3px;font-size:11.2px;letter-spacing:0">Добавление позиции: Вставить точку.</span><span style="left:1031px">x: 35,9054</span><span style="left:1113px">y: 23,0607</span><span style="left:1195px">z: 0,00</span></div>
</body>
</html>
